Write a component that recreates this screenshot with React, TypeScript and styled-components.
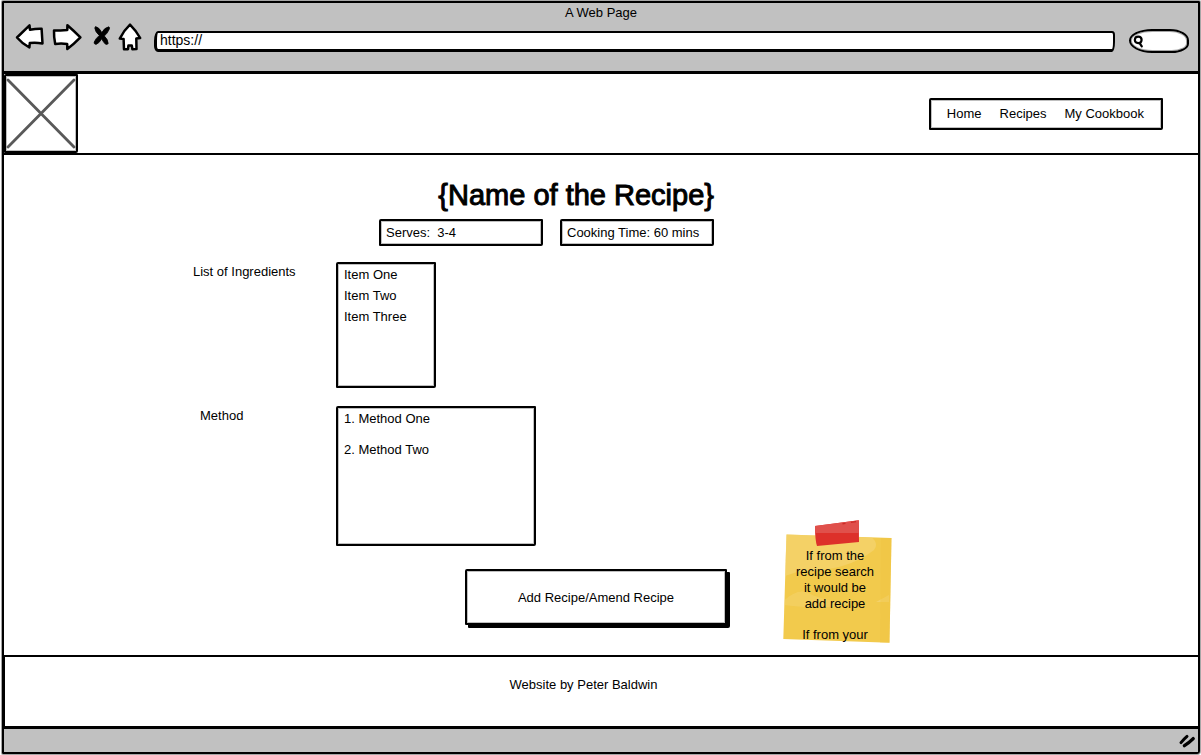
import React from "react";
import styled, { createGlobalStyle, css } from "styled-components";

const ink = "#000";
const chrome = "#c1c1c1";

const GlobalStyle = createGlobalStyle`
  *, *::before, *::after { box-sizing: border-box; }
  body {
    margin: 0;
    background: #fff;
    color: ${ink};
    font-family: "Liberation Sans", Arial, sans-serif;
    font-size: 13px;
    line-height: 21px;
  }
  h1, h2, p, ul, ol { margin: 0; padding: 0; }
  ul, ol { list-style: none; }
  button, input { font: inherit; color: inherit; }
`;

const inked = css`
  border: 2px solid ${ink};
  border-radius: 2px 1px 2px 1px;
  outline: 1px solid rgba(0, 0, 0, 0.25);
  outline-offset: -3px;
  background: #fff;
`;

const Page = styled.div`
  min-height: 100vh;
  padding: 1px 1px 1px 2px;
  display: flex;
  flex-direction: column;
`;

const BrowserFrame = styled.div`
  flex: 1;
  display: flex;
  flex-direction: column;
  border: 2px solid ${ink};
  border-radius: 1px 1px 3px 1px;
  box-shadow: 0 0 0 1px rgba(0, 0, 0, 0.35);
`;

const Toolbar = styled.div`
  height: 71px;
  background: ${chrome};
  border-bottom: 3px solid ${ink};
`;

const WindowTitle = styled.p`
  line-height: 20px;
  text-align: center;
`;

const Controls = styled.div`
  height: 36px;
  display: flex;
  align-items: center;
  padding: 0 9px 0 10px;
`;

const IconButton = styled.button<{ $width: number }>`
  width: ${(p) => p.$width}px;
  height: 36px;
  padding: 0;
  border: 0;
  background: none;

  svg {
    display: block;
    width: 100%;
    height: 100%;
  }
`;

const AddressInput = styled.input`
  flex: 1;
  min-width: 0;
  height: 21px;
  margin: 0 14px 0 8px;
  padding: 0 3px;
  border: 2px solid ${ink};
  border-left-width: 3px;
  border-bottom-width: 3px;
  border-radius: 4px 3px 3px 4px / 10px 4px 10px 6px;
  background: #fff;
  font-size: 14px;
`;

const SearchBox = styled.label`
  width: 60px;
  height: 24px;
  display: flex;
  align-items: center;
  padding-left: 1px;
  border: 2px solid ${ink};
  border-radius: 24px 20px 18px 24px / 12px 12px 10px 13px;
  outline: 1px solid rgba(0, 0, 0, 0.35);
  outline-offset: -3px;
  background: #fff;

  svg {
    flex: none;
  }
`;

const SearchInput = styled.input`
  flex: 1;
  min-width: 0;
  height: 16px;
  padding: 0;
  border: 0;
  background: none;
  outline: none;
`;

const SiteHeader = styled.header`
  display: flex;
  align-items: center;
  justify-content: space-between;
  height: 81px;
  padding-right: 35px;
  border-bottom: 2px solid ${ink};
`;

const Logo = styled.svg`
  width: 74px;
  height: 79px;
  ${inked}
`;

const Nav = styled.nav`
  display: flex;
  align-items: center;
  gap: 18px;
  height: 32px;
  padding: 0 17px 0 16px;
  ${inked}

  a {
    color: inherit;
    text-decoration: none;
  }
`;

const Main = styled.main`
  flex: 1;
  padding: 22px 0 28px;
  border-bottom: 2px solid ${ink};
`;

const Recipe = styled.article`
  width: 100%;
  max-width: 820px;
  margin: 0 auto;
`;

const RecipeHeading = styled.div`
  width: fit-content;
  margin: 0 0 16px 188px;
  display: flex;
  flex-direction: column;
  align-items: flex-end;
  gap: 6px;
`;

const Title = styled.h1`
  font-size: 29px;
  line-height: 36px;
  font-weight: 400;
  -webkit-text-stroke: 1px ${ink};
`;

const MetaRow = styled.div`
  display: flex;
  gap: 17px;
`;

const Meta = styled.p<{ $width: number }>`
  width: ${(p) => p.$width}px;
  height: 27px;
  padding: 0 5px;
  line-height: 23px;
  white-space: pre;
  ${inked}
`;

const Field = styled.section`
  display: flex;
  align-items: flex-start;
  margin-bottom: 18px;
`;

const FieldLabel = styled.h2<{ $indent: number }>`
  width: 145px;
  padding-left: ${(p) => p.$indent}px;
  font-size: 13px;
  line-height: 20px;
  font-weight: 400;
`;

const ListBox = styled.div<{ $width: number; $height: number; $gap?: number }>`
  width: ${(p) => p.$width}px;
  min-height: ${(p) => p.$height}px;
  padding: 0 6px;
  ${inked}

  ul, ol {
    display: flex;
    flex-direction: column;
    gap: ${(p) => p.$gap ?? 0}px;
  }
`;

const Actions = styled.div`
  position: relative;
  width: 262px;
  margin: 23px 0 0 274px;
`;

const ActionButton = styled.button`
  width: 100%;
  height: 56px;
  padding: 0;
  display: block;
  ${inked}
  box-shadow: 3px 3px 0 ${ink};
`;

const StickyNote = styled.aside`
  position: absolute;
  top: -49px;
  left: calc(100% + 56px);
  width: 110px;
  height: 124px;
  padding-top: 28px;
  overflow: hidden;
  text-align: center;
  line-height: 16px;

  svg {
    position: absolute;
    inset: 0;
    z-index: -1;
  }

  p {
    padding-right: 6px;
  }

  p + p {
    margin-top: 15px;
  }
`;

const SiteFooter = styled.footer`
  height: 69px;
  padding: 17px 36px 0 0;
  border-left: 1px solid ${ink};
  text-align: center;
`;

const StatusBar = styled.div`
  height: 26px;
  display: flex;
  justify-content: flex-end;
  align-items: center;
  padding-right: 2px;
  border-top: 3px solid ${ink};
  background: ${chrome};
`;

const outline = {
  fill: "#fff",
  stroke: ink,
  strokeWidth: 2.5,
  strokeLinejoin: "round" as const,
};

const BackIcon = () => (
  <svg viewBox="14 23 34 36" aria-hidden="true">
    <path {...outline} d="M17 37.5 L29.5 25.3 L30 29.8 Q36 28.6 41.6 28.8 L42.5 43.4 Q36 42.4 29.8 43 L29.4 47.5 Q22 43.5 17 37.5 Z" />
  </svg>
);

const ForwardIcon = () => (
  <svg viewBox="48 23 38 36" aria-hidden="true">
    <path {...outline} d="M54 30.6 Q60 30.6 67.3 30 L67.4 25.3 Q74 31 80.4 37.4 Q74 44 67.3 49 L67.2 44 Q61 43 55.2 44 Q53.8 37 54 30.6 Z" />
  </svg>
);

const StopIcon = () => (
  <svg viewBox="86 23 30 36" aria-hidden="true">
    <path
      fill={ink}
      stroke={ink}
      strokeWidth="0.8"
      strokeLinejoin="round"
      d="M95.5 26.6 Q99.5 27.6 101.8 32.6 Q104.5 27.6 108.8 26.8 Q110.2 27.6 109.1 29.6 Q107.4 33.4 104.3 36 Q108 39.4 108.2 43.6 Q106.6 45.3 104.8 43.6 Q102.8 41 101.6 38.8 Q99.4 43.2 96 44.4 Q93.6 44 94.2 42 Q96 38.2 99.3 35.4 Q95.2 32 94.8 28 Z"
    />
  </svg>
);

const HomeIcon = () => (
  <svg viewBox="116 23 30 36" aria-hidden="true">
    <path {...outline} d="M130 24.6 Q136 30.5 140.2 38 L136.3 38.6 L136.5 49 L132.4 49.2 L131.8 45.6 L128.4 45.6 L128 49.2 L124 49.2 L123.6 39 L119.8 38.6 Q123.6 30.6 130 24.6 Z" />
  </svg>
);

const SearchIcon = () => (
  <svg width="13" height="14" viewBox="0 0 13 14" fill="none" stroke={ink} strokeWidth="2.2" strokeLinecap="round" aria-hidden="true">
    <path d="M2.8 6 Q3 2.6 6.2 2.6 Q9.6 2.6 9.6 6 Q9.4 9.2 6.2 9.2 Q3 9 2.8 6 Z M7.4 8.8 L9.8 12.4" />
  </svg>
);

const GripIcon = () => (
  <svg width="18" height="16" viewBox="0 0 18 16" fill="none" stroke={ink} strokeLinecap="round" aria-hidden="true">
    <path strokeWidth="3" d="M3 9.6 Q6 6 9 3.4" />
    <path strokeWidth="3.4" d="M6.4 12.6 Q11 9.8 15.2 5.6" />
  </svg>
);

const NotePaper = () => (
  <svg width="110" height="124" viewBox="783 520 110 124" aria-hidden="true">
    <path fill="#f2ca4c" d="M786.5 534.5 L891.5 538 L889.5 642.8 L783.3 639 Z" />
    <path fill="#f5d678" d="M786.5 534.5 L872 537.5 Q879 544 874 550 Q846 572 800 571 L785 576 Z" opacity=".6" />
    <path fill="#f6d980" d="M784.6 600 Q800 586 812 595 Q836 604 855 602 Q830 611 784 605 Z" opacity=".35" />
    <path fill="#f5d678" d="M876 602 L889 595 L889 602 Z" opacity=".7" />
    <path fill="#efc440" d="M881 538 L891.5 538 L889.5 642.8 L880 642.4 Z" opacity=".4" />
    <path fill="#dd302a" d="M815 526 L858.8 520.3 L859 542 L817 546 Q815 540 815 526 Z" />
    <path fill="#e0504b" d="M815 526 L858.8 520.3 L858.8 533 L815.2 533 Z" />
    <path stroke="#cc2b27" strokeWidth="1.4" d="M842.5 523.8 L845.5 523.4 M851 522.4 L856 521.6" />
  </svg>
);

export default function App() {
  return (
    <Page>
      <GlobalStyle />
      <BrowserFrame>
        <Toolbar>
          <WindowTitle>A Web Page</WindowTitle>
          <Controls>
            <IconButton $width={34} aria-label="Back"><BackIcon /></IconButton>
            <IconButton $width={38} aria-label="Forward"><ForwardIcon /></IconButton>
            <IconButton $width={30} aria-label="Stop"><StopIcon /></IconButton>
            <IconButton $width={30} aria-label="Home page"><HomeIcon /></IconButton>
            <AddressInput aria-label="Address" defaultValue="https://" />
            <SearchBox>
              <SearchIcon />
              <SearchInput type="text" aria-label="Search" />
            </SearchBox>
          </Controls>
        </Toolbar>

        <SiteHeader>
          <Logo viewBox="0 0 70 75" preserveAspectRatio="none" role="img" aria-label="Logo">
            <path d="M2 4 L68 71 M68 4 L2 71" stroke="#595959" strokeWidth="2.8" strokeLinecap="round" />
          </Logo>
          <Nav>
            <a href="#home">Home</a>
            <a href="#recipes">Recipes</a>
            <a href="#cookbook">My Cookbook</a>
          </Nav>
        </SiteHeader>

        <Main>
          <Recipe>
            <RecipeHeading>
              <Title>{"{Name of the Recipe}"}</Title>
              <MetaRow>
                <Meta $width={164}>{"Serves:  3-4"}</Meta>
                <Meta $width={154}>Cooking Time: 60 mins</Meta>
              </MetaRow>
            </RecipeHeading>

            <Field>
              <FieldLabel $indent={2}>List of Ingredients</FieldLabel>
              <ListBox $width={100} $height={126}>
                <ul>
                  <li>Item One</li>
                  <li>Item Two</li>
                  <li>Item Three</li>
                </ul>
              </ListBox>
            </Field>

            <Field>
              <FieldLabel $indent={9}>Method</FieldLabel>
              <ListBox $width={200} $height={140} $gap={10}>
                <ol>
                  <li>1. Method One</li>
                  <li>2. Method Two</li>
                </ol>
              </ListBox>
            </Field>

            <Actions>
              <ActionButton type="button">Add Recipe/Amend Recipe</ActionButton>
              <StickyNote>
                <NotePaper />
                <p>
                  If from the
                  <br />
                  recipe search
                  <br />
                  it would be
                  <br />
                  add recipe
                </p>
                <p>If from your</p>
              </StickyNote>
            </Actions>
          </Recipe>
        </Main>

        <SiteFooter>Website by Peter Baldwin</SiteFooter>
        <StatusBar>
          <GripIcon />
        </StatusBar>
      </BrowserFrame>
    </Page>
  );
}
